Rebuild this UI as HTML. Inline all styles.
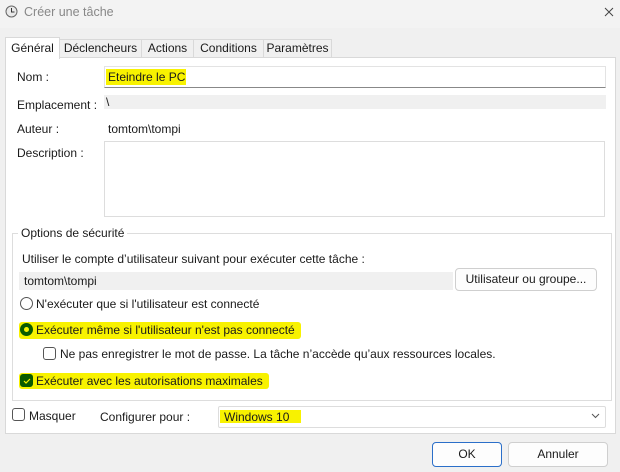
<!DOCTYPE html>
<html><head><meta charset="utf-8"><style>
*{box-sizing:border-box;margin:0;padding:0}
body{width:620px;height:472px;background:#f0f0f0;font-family:"Liberation Sans",sans-serif;font-size:12px;color:#1a1a1a;position:relative;overflow:hidden}
.a{position:absolute;white-space:nowrap}
.tab{position:absolute;top:39px;height:19px;border:1px solid #d9d9d9;background:#f0f0f0;text-align:center;line-height:17px}
.hl{background:#f8f200}
.rad{position:absolute;width:13px;height:13px;border:1px solid #555;border-radius:50%;background:#fff}
.chk{position:absolute;width:13px;height:13px;border:1px solid #555;border-radius:3px;background:#fff}
.btn{position:absolute;background:#fdfdfd;border:1px solid #cfcfcf;border-radius:4px;text-align:center}
</style></head><body>
<div class="a" style="left:0;top:0;width:620px;height:28px;background:#f3f3f3"></div>
<svg class="a" style="left:5px;top:5px" width="13" height="13" viewBox="0 0 13 13"><circle cx="6.5" cy="6.5" r="5.5" fill="#e8e8e8" stroke="#666"/><path d="M6.5 3v4h3" stroke="#333" fill="none"/></svg>
<div class="a" style="left:24px;top:5px;color:#888;font-size:12.5px">Créer une tâche</div>
<svg class="a" style="left:604px;top:7px" width="10" height="10"><path d="M1 1l8 8M9 1l-8 8" stroke="#444"/></svg>
<div class="a" style="left:5px;top:57px;width:611px;height:377px;background:#fff;border:1px solid #d9d9d9"></div>
<div class="tab" style="left:59px;width:83px">Déclencheurs</div>
<div class="tab" style="left:141px;width:53px">Actions</div>
<div class="tab" style="left:193px;width:71px">Conditions</div>
<div class="tab" style="left:263px;width:69px">Paramètres</div>
<div class="tab" style="left:5px;top:37px;width:55px;height:22px;background:#fff;border-bottom:none;line-height:20px">Général</div>
<div class="a" style="left:17px;top:70px">Nom :</div>
<div class="a" style="left:104px;top:66px;width:502px;height:22px;border:1px solid #e3e3e3;border-bottom:1px solid #888"></div>
<div class="a hl" style="left:106px;top:69px;width:80px;height:16px"></div>
<div class="a" style="left:108px;top:70px">Eteindre le PC</div>
<div class="a" style="left:17px;top:98px">Emplacement :</div>
<div class="a" style="left:104px;top:95px;width:502px;height:14px;background:#f0f0f0"></div>
<div class="a" style="left:106px;top:95px">\</div>
<div class="a" style="left:17px;top:122px">Auteur :</div>
<div class="a" style="left:108px;top:122px">tomtom\tompi</div>
<div class="a" style="left:17px;top:146px">Description :</div>
<div class="a" style="left:104px;top:141px;width:501px;height:76px;border:1px solid #ddd"></div>
<div class="a" style="left:12px;top:233px;width:600px;height:168px;border:1px solid #ddd"></div>
<div class="a" style="left:18px;top:226px;background:#fff;padding:0 3px">Options de sécurité</div>
<div class="a" style="left:22px;top:252px">Utiliser le compte d’utilisateur suivant pour exécuter cette tâche :</div>
<div class="a" style="left:19px;top:272px;width:434px;height:18px;background:#f0f0f0"></div>
<div class="a" style="left:24px;top:274px">tomtom\tompi</div>
<div class="btn" style="left:455px;top:268px;width:142px;height:23px;line-height:21px">Utilisateur ou groupe...</div>
<div class="rad" style="left:20px;top:297px"></div>
<div class="a" style="left:36px;top:297px">N'exécuter que si l'utilisateur est connecté</div>
<div class="a hl" style="left:19px;top:322px;width:282px;height:17px;border-radius:3px"></div>
<div class="rad" style="left:20px;top:323px;background:#0a5a00;border-color:#0a5a00"><div style="position:absolute;left:3px;top:3px;width:5px;height:5px;border-radius:50%;background:#f8f200"></div></div>
<div class="a" style="left:36px;top:323px">Exécuter même si l'utilisateur n'est pas connecté</div>
<div class="chk" style="left:43px;top:347px"></div>
<div class="a" style="left:60px;top:347px">Ne pas enregistrer le mot de passe. La tâche n’accède qu’aux ressources locales.</div>
<div class="a hl" style="left:19px;top:373px;width:250px;height:16px;border-radius:3px"></div>
<div class="chk" style="left:20px;top:374px;background:#0a5a00;border-color:#0a5a00"><svg style="position:absolute;left:1px;top:1px" width="10" height="10"><path d="M2 5l2 2 4-4" stroke="#f8f200" fill="none" stroke-width="1.2"/></svg></div>
<div class="a" style="left:36px;top:374px">Exécuter avec les autorisations maximales</div>
<div class="chk" style="left:12px;top:408px"></div>
<div class="a" style="left:29px;top:409px">Masquer</div>
<div class="a" style="left:100px;top:410px">Configurer pour :</div>
<div class="a" style="left:218px;top:406px;width:388px;height:22px;border:1px solid #ddd;border-radius:2px"></div>
<div class="a hl" style="left:220px;top:410px;width:81px;height:13px"></div>
<div class="a" style="left:224px;top:410px">Windows 10</div>
<svg class="a" style="left:591px;top:413px" width="9" height="6"><path d="M1 1l3.5 3.5L8 1" stroke="#555" fill="none"/></svg>
<div class="btn" style="left:432px;top:442px;width:70px;height:25px;line-height:23px;border:1px solid #2b6fc9">OK</div>
<div class="btn" style="left:508px;top:442px;width:100px;height:25px;line-height:23px">Annuler</div>
</body></html>
